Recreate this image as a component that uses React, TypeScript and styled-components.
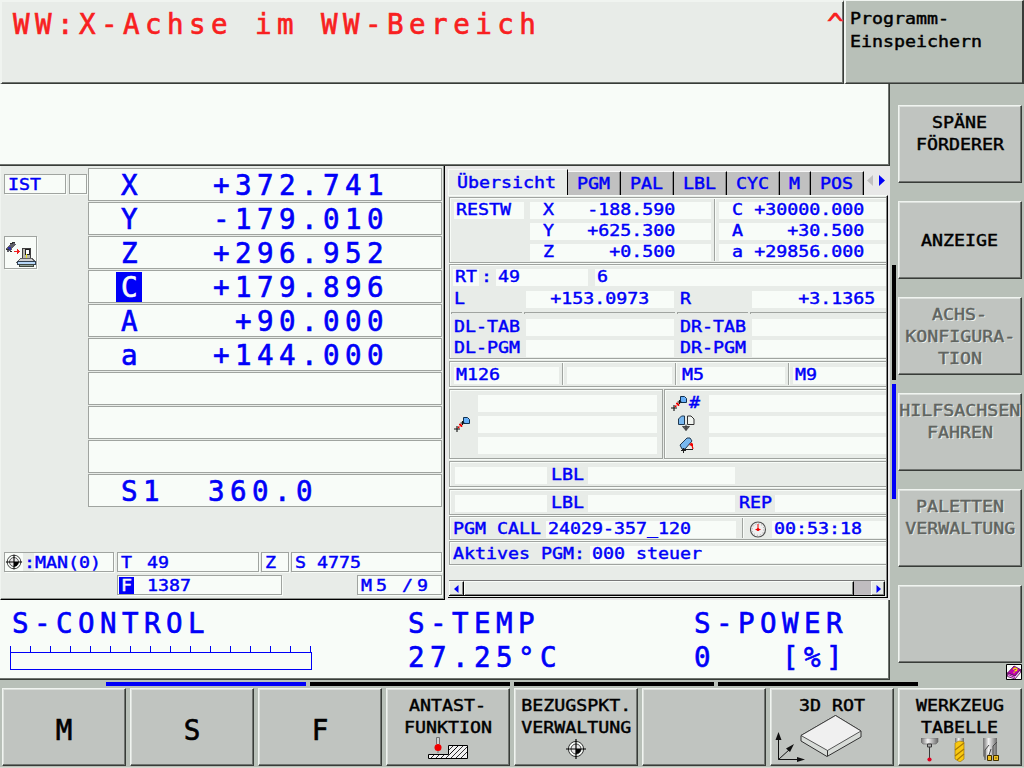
import React from 'react';
import styled, { createGlobalStyle, css } from 'styled-components';

const c = {
  frame: '#b8c0b8',
  panel: '#e8ece8',
  white: '#f8fcf8',
  button: '#c0c4c0',
  line: '#a0a4a0',
  mid: '#707470',
  dark: '#383c38',
  light: '#f0f4f0',
  blue: '#0000f8',
  red: '#f82020',
};

const Global = createGlobalStyle`
  * { box-sizing: border-box; }
  body { margin: 0; background: ${c.frame}; }
  svg { display: block; }
`;

type Align = 'left' | 'right' | 'center';

const Small = styled.span<{ $align?: Align; $color?: string; $shadow?: boolean; $pad?: number }>`
  display: block;
  flex: none;
  font: 15px/17px 'DejaVu Sans Mono', 'Liberation Mono', monospace;
  white-space: pre;
  color: ${p => p.$color ?? c.blue};
  text-align: ${p => p.$align ?? 'left'};
  margin-left: ${p => p.$pad ?? 0}px;
  transform: scaleX(1.218);
  transform-origin: ${p => p.$align ?? 'left'} center;
  -webkit-text-stroke: 0.42px currentColor;
  ${p => p.$shadow && css`text-shadow: 1px 1px 0 ${c.light};`}
`;

const Large = styled.span<{ $color?: string; $w?: number; $align?: Align }>`
  display: block;
  flex: none;
  width: ${p => (p.$w ? `${p.$w}px` : 'auto')};
  text-align: ${p => p.$align ?? 'left'};
  font: 27.5px/33px 'DejaVu Sans Mono', 'Liberation Mono', monospace;
  letter-spacing: 5.45px;
  white-space: pre;
  color: ${p => p.$color ?? c.blue};
  -webkit-text-stroke: 0.65px currentColor;
`;

const Screen = styled.div`
  width: 1024px;
  height: 768px;
  overflow: hidden;
  display: flex;
  flex-direction: column;
  background: ${c.frame};
`;

const Header = styled.header`
  display: flex;
  height: 84px;
`;

const Message = styled.div`
  display: flex;
  justify-content: space-between;
  width: 844px;
  padding: 6px 0 0 11px;
  background: ${c.panel};
  border-style: solid;
  border-width: 2px 1px 1px 2px;
  border-color: ${c.light} ${c.dark} ${c.dark} ${c.light};
  box-shadow: inset -1px -1px 0 ${c.mid};
`;

const Mode = styled.div`
  flex: 1;
  padding: 10px 0 0 4px;
  border-style: solid;
  border-width: 1px 2px 1px 2px;
  border-color: ${c.light} ${c.dark} ${c.dark} ${c.light};
  box-shadow: inset 0 -1px 0 ${c.mid};
  & > span + span { margin-top: 6px; }
`;

const Middle = styled.div`
  display: flex;
  height: 596px;
`;

const Main = styled.main`
  width: 890px;
  display: flex;
  flex-direction: column;
`;

const Prompt = styled.div`
  height: 82px;
  background: ${c.white};
  border-right: 1px solid ${c.dark};
  border-bottom: 1px solid ${c.dark};
  box-shadow: inset -1px -1px 0 ${c.mid};
`;

const Panels = styled.div`
  display: flex;
  height: 434px;
`;

const Position = styled.section`
  width: 445px;
  padding: 2px 0 0 3px;
  background: ${c.panel};
  border-style: solid;
  border-width: 0 1px 1px 1px;
  border-color: #000 #000 #000 ${c.light};
  box-shadow: inset -1px -1px 0 #909490;
`;

const Split = styled.div`
  display: flex;
`;

const Side = styled.div`
  width: 84px;
  padding-top: 6px;
`;

const Box = styled.div<{ $w: number; $h?: number; $ml?: number }>`
  display: flex;
  flex: none;
  align-items: flex-start;
  width: ${p => p.$w}px;
  height: ${p => p.$h ?? 20}px;
  margin-left: ${p => p.$ml ?? 0}px;
  background: ${c.white};
  border: 1px solid ${c.line};
  box-shadow: 1px 1px 0 ${c.white};
  & span { line-height: 20px; }
`;

const IconBox = styled(Box)`
  margin-top: 42px;
`;

const AxisList = styled.div`
  display: grid;
  gap: 1px;
  width: 354px;
`;

const AxisRow = styled.div`
  display: flex;
  align-items: flex-start;
  height: 33px;
  padding-left: 27px;
  background: ${c.white};
  border: 1px solid ${c.line};
`;

const AxisName = styled.div<{ $active?: boolean }>`
  width: ${p => (p.$active ? 26 : 81)}px;
  height: 30px;
  margin-top: 1px;
  margin-right: ${p => (p.$active ? 55 : 0)}px;
  padding-left: 5px;
  background: ${p => (p.$active ? c.blue : 'transparent')};
  & > span { line-height: 30px; }
`;

const AxisValue = styled.div`
  width: 192px;
  display: flex;
  justify-content: flex-end;
`;

const SpindleValue = styled.div`
  padding-left: 11px;
`;

const StatusLine = styled.div<{ $mt: number }>`
  display: flex;
  margin-top: ${p => p.$mt}px;
`;

const FTag = styled.div`
  width: 15px;
  height: 17px;
  margin: 1px 0 0 1px;
  padding-left: 2px;
  background: ${c.blue};
  & > span { line-height: 18px; }
`;

const Colon = styled.div`
  width: 11px;
  height: 18px;
  padding-left: 1px;
  background: ${c.panel};
`;

const Overview = styled.section`
  flex: 1;
  padding: 3px 2px 2px 3px;
  background: #e8e8e8;
`;

const Tabs = styled.div`
  display: flex;
  align-items: flex-end;
  height: 26px;
  padding-left: 1px;
`;

const Tab = styled.div<{ $w: number; $active?: boolean }>`
  flex: none;
  width: ${p => p.$w}px;
  height: ${p => (p.$active ? 26 : 24)}px;
  padding-top: ${p => (p.$active ? 5 : 4)}px;
  padding-right: ${p => (p.$active ? 0 : 1)}px;
  background: ${p => (p.$active ? c.panel : '#c0c0c0')};
  border-top: 1px solid #f8f8f8;
  border-right: 1px solid #000;
  box-shadow: ${p => (p.$active ? `-1px 0 0 ${c.white}` : 'inset -1px 0 0 #888')};
`;

const TabArrows = styled.div`
  padding: 0 0 8px 2px;
`;

const Content = styled.div`
  width: 440px;
  height: 403px;
  padding: 1px 0 0 1px;
  background: ${c.panel};
  border-right: 1px solid #000;
  border-bottom: 1px solid #000;
  border-top: 1px solid ${c.white};
  box-shadow: inset -1px 0 0 #888;
`;

const Group = styled.div<{ $h: number; $mb?: number; $pt?: number }>`
  width: 437px;
  height: ${p => p.$h}px;
  margin-bottom: ${p => p.$mb ?? 1}px;
  padding-top: ${p => p.$pt ?? 4}px;
  border: 1px solid ${c.line};
  border-right: 0;
  box-shadow: inset 1px 1px 0 ${c.white}, 0 1px 0 ${c.white};
`;

const Line = styled.div<{ $mt?: number }>`
  display: flex;
  height: 17px;
  margin-top: ${p => p.$mt ?? 0}px;
`;

const Label = styled.div<{ $w: number; $ml?: number }>`
  flex: none;
  width: ${p => p.$w}px;
  margin-left: ${p => p.$ml ?? 0}px;
`;

const Field = styled.div<{ $w?: number; $ml?: number; $end?: number }>`
  display: flex;
  flex: ${p => (p.$w ? 'none' : '1')};
  width: ${p => (p.$w ? `${p.$w}px` : 'auto')};
  height: 17px;
  margin-left: ${p => p.$ml ?? 0}px;
  padding-left: 2px;
  padding-right: ${p => p.$end ?? 0}px;
  justify-content: ${p => (p.$end ? 'flex-end' : 'flex-start')};
  background: ${c.white};
`;

const AxisField = styled(Field)`
  justify-content: space-between;
  padding-left: 13px;
`;

const Columns = styled.div`
  display: flex;
`;

const Stack = styled.div<{ $w?: number; $ml: number; $gap?: number }>`
  flex: ${p => (p.$w ? 'none' : '1')};
  width: ${p => (p.$w ? `${p.$w}px` : 'auto')};
  margin-left: ${p => p.$ml}px;
  display: grid;
  gap: ${p => p.$gap ?? 4}px;
  align-content: start;
`;

const VLine = styled.i<{ $h: number; $ml: number; $mt?: number }>`
  flex: none;
  width: 2px;
  height: ${p => p.$h}px;
  margin: ${p => p.$mt ?? -3}px 0 0 ${p => p.$ml}px;
  background: ${c.line};
  border-right: 1px solid ${c.white};
`;

const Rule = styled.div`
  display: flex;
  gap: 2px;
  margin: 4px 0 5px 1px;
  & > i {
    height: 2px;
    border-top: 1px solid ${c.line};
    border-left: 1px solid ${c.line};
  }
`;

const Seg = styled.i<{ $w: number }>`
  width: ${p => p.$w}px;
`;

const Pair = styled.div`
  display: flex;
  gap: 1px;
  margin-bottom: 2px;
`;

const Pane = styled.div<{ $w: number; $open?: boolean }>`
  display: flex;
  width: ${p => p.$w}px;
  height: 70px;
  padding-top: 5px;
  border: 1px solid ${c.line};
  border-right-width: ${p => (p.$open ? 0 : 1)}px;
  box-shadow: inset 1px 1px 0 ${c.white}, 0 1px 0 ${c.white};
`;

const IconColumn = styled.div<{ $w: number }>`
  flex: none;
  width: ${p => p.$w}px;
`;

const IconRow = styled.div<{ $ml: number; $mt: number }>`
  display: flex;
  height: 17px;
  margin-left: ${p => p.$ml}px;
  margin-top: ${p => p.$mt}px;
`;

const ScrollBar = styled.div`
  display: flex;
  width: 436px;
  height: 16px;
  margin-top: 15px;
  background: #c0bcc0;
  border-top: 1px solid #787878;
  border-bottom: 1px solid #000;
`;

const ScrollButton = styled.div<{ $w: number }>`
  width: ${p => p.$w}px;
  display: flex;
  align-items: center;
  justify-content: center;
  background: ${c.panel};
  border-left: 1px solid ${c.white};
  border-top: 1px solid ${c.white};
  border-right: 1px solid #000;
  box-shadow: inset -1px -1px 0 #888;
`;

const Thumb = styled(ScrollButton)`
  margin-right: 17px;
`;

const Monitor = styled.section`
  display: flex;
  height: 80px;
  padding: 6px 0 0 12px;
  background: ${c.white};
  border-right: 1px solid ${c.dark};
  border-bottom: 1px solid ${c.dark};
  box-shadow: inset -1px -1px 0 ${c.mid};
`;

const Reading = styled.div<{ $w: number }>`
  width: ${p => p.$w}px;
  & > span { line-height: 34px; }
`;

const Gauge = styled.div`
  width: 302px;
  margin: 6px 0 0 -2px;
`;

const Ticks = styled.div`
  display: flex;
  height: 6px;
  gap: 19px;
  & > i { width: 1px; background: ${c.blue}; }
`;

const Bar = styled.div`
  height: 18px;
  border: 1px solid ${c.blue};
`;

const SideKeys = styled.aside`
  display: flex;
  width: 134px;
  padding-left: 2px;
`;

const VBars = styled.div`
  display: grid;
  align-content: start;
  gap: 4px;
  width: 4px;
  margin: 181px 2px 0 0;
`;

const VBar = styled.i<{ $color: string }>`
  height: 115px;
  background: ${p => p.$color};
`;

const SideColumn = styled.div`
  padding-top: 21px;
  width: 124px;
`;

const KeyList = styled.div`
  display: grid;
  gap: 18px;
`;

const Key = styled.button`
  display: flex;
  flex-direction: column;
  align-items: center;
  width: 124px;
  height: 78px;
  margin: 0;
  padding: 9px 0 0;
  background: ${c.button};
  border-style: solid;
  border-width: 1px;
  border-color: ${c.light} ${c.dark} ${c.dark} ${c.light};
  box-shadow: inset -1px -1px 0 ${c.mid}, inset 1px 1px 0 #dce0dc;
  border-radius: 0;
  & > span + span { margin-top: 5px; }
`;

const KeyLarge = styled(Key)`
  padding-top: 25px;
  & > span { letter-spacing: 0; }
`;

const Help = styled.div`
  margin: 1px 0 0 108px;
`;

const Footer = styled.footer`
  height: 88px;
  border-bottom: 1px solid #d8d8d0;
`;

const HBars = styled.div`
  display: flex;
  gap: 4px;
  padding: 2px 0 0 106px;
`;

const HBar = styled.i<{ $color: string }>`
  width: 200px;
  height: 4px;
  background: ${p => p.$color};
`;

const KeyRow = styled.div`
  display: flex;
  gap: 4px;
  margin: 2px 0 0 2px;
`;

const KeyIcon = styled.div<{ $mt: number; $ml?: number }>`
  margin-top: ${p => p.$mt}px;
  margin-left: ${p => p.$ml ?? 0}px;
`;

const Target = ({ size, cross }: { size: number; cross?: boolean }) => (
  <svg width={size} height={size} viewBox="0 0 20 20">
    <circle cx="10" cy="10" r="7.6" fill={c.white} stroke="#303030" />
    <circle cx="10" cy="10" r="5" fill="#e8e8e8" stroke="#484848" />
    <path d="M10 10H15A5 5 0 0 1 10 15Z" fill="#000" />
    <path d={cross ? 'M0 10H20M10 0V20' : 'M1 10H19M10 2V18'} stroke="#000" strokeWidth="1.2" />
  </svg>
);

const HandwheelIcon = () => (
  <svg width="31" height="31" viewBox="5 237 31 31" shapeRendering="crispEdges">
    <path d="M6 248l4-4 4-1 2 1-3 3-2 4-4 1z" fill="#606068" />
    <path d="M8 247h3v3h-3z" fill="#3030a0" />
    <path d="M10 244l5-2M6 249h3M10 251h2" stroke="#303030" />
    <path d="M14 251h6M17 249v5M18 250v3" stroke="#f02020" />
    <path d="M22.500 258V248.500H30.500V258" fill="#b8b8b0" stroke="#404040" />
    <path d="M25 249h4v5h-4z" fill="#fff" stroke="#202020" />
    <path d="M26 254h1v4h-1z" fill="#e8e020" />
    <path d="M21 258h11l3 4H17z" fill="#d0d0d0" stroke="#606060" />
    <path d="M17.500 261.500h18v3h-18z" fill="#b8d8f8" stroke="#304050" />
    <path d="M19.500 264.500h14v2h-14z" fill="#90a098" stroke="#404840" />
  </svg>
);

const ShiftIcon = () => (
  <svg width="16" height="16" viewBox="0 0 16 16">
    <path d="M9.500 1.500h4l2 2v4h-6z" fill="#68b0f8" stroke="#103050" />
    <path d="M0 13h6M3 10v6M6.500 7h4M8.500 5v4" stroke="#101010" strokeWidth="1.1" />
    <path d="M4 12l4-4M5 8.500h2.500v3" stroke="#f00000" strokeWidth="1.500" strokeDasharray="2 1" fill="none" />
  </svg>
);

const MirrorIcon = () => (
  <svg width="17" height="16" viewBox="0 0 17 16">
    <path d="M.5 9.500V4l3-3h3v8.500z" fill="#78b8f0" stroke="#203850" />
    <path d="M9.500 9.500V1h3.500l3 3v5.500z" fill="#f0f4f0" stroke="#303030" />
    <path d="M4.500 11.500h7l-3.500 4z" fill="#606060" stroke="#383838" strokeWidth=".8" />
    <path d="M8 9.500v6" stroke="#383838" />
  </svg>
);

const RotateIcon = () => (
  <svg width="16" height="17" viewBox="0 0 16 17">
    <path d="M1 8L8 1h3l2 3-7 8H3z" fill="#78b8f0" stroke="#203850" />
    <path d="M3 12.500H14M4.500 11v5M2 13.500h5" stroke="#202020" />
    <path d="M10.500 8l2-1.500L14 12" stroke="#f00000" fill="none" strokeWidth="1.200" />
    <path d="M11.500 6.500h2.500v2.500h-2.500z" fill="#f00000" />
  </svg>
);

const ClockIcon = () => (
  <svg width="17" height="17" viewBox="0 0 17 17">
    <circle cx="8" cy="8.500" r="7.500" fill="#f0f0f0" stroke="#505050" strokeWidth="1.100" />
    <circle cx="8" cy="8.500" r="5.800" fill="none" stroke="#a0a0a0" strokeDasharray="1 2" />
    <path d="M8 3V9M5.500 8.500h5" stroke="#f00000" />
    <circle cx="8" cy="8.500" r="1.600" fill="#f00000" />
  </svg>
);

const ProbeIcon = () => (
  <svg width="40" height="22" viewBox="0 0 40 22">
    <path d="M8.500 7V.5h3V7M10 12v4" fill="#d0d0d0" stroke="#707070" />
    <circle cx="10" cy="10.500" r="3.500" fill="#f00000" />
    <path d="M.5 21.500V17.500H20.500V8.500H39.500V21.500Z" fill="#f0f0f0" stroke="#000" />
    <path d="M3 21l3-3M8 21l3-3M13 21l3-3M18 21L30 9M22 17l8-8M21 13l4-4M23 21L35 9M28 21L39 10M33 21l6-6" stroke="#000" strokeWidth=".8" />
  </svg>
);

const PlaneIcon = () => (
  <svg width="88" height="50" viewBox="0 0 88 50">
    <path d="M26 20.500L60.500.5 86 16v6L52 41.500 26 26z" fill="#d8dcd8" stroke="#303030" />
    <path d="M26 20.500L60.500.5 86 16 52.500 35.500z" fill="#f0f0f0" stroke="#303030" strokeWidth=".8" />
    <path d="M52.500 35.500V41" stroke="#303030" />
    <path d="M3.500 20V44.500H24M3.500 44.500L15 34" fill="none" stroke="#101010" />
    <path d="M.5 25L3.500 17l3 8zM22 42l8 2.500-8 2.500zM11 33.500L19 29l-4 8z" fill="#101010" />
  </svg>
);

const ToolsIcon = () => (
  <svg width="78" height="24" viewBox="0 0 78 24">
    <defs>
      <linearGradient id="steel" x2="1">
        <stop offset="0" stopColor="#707070" />
        <stop offset=".4" stopColor="#f4f4f4" />
        <stop offset="1" stopColor="#686868" />
      </linearGradient>
    </defs>
    <path d="M0 0H17V4l-2 2H2L0 4z" fill="url(#steel)" stroke="#686868" strokeWidth=".6" />
    <path d="M6.500 6h4v3h-4zM8.500 9v12" fill="#b0b0b0" stroke="#383838" />
    <circle cx="8.500" cy="21.500" r="2.100" fill="#e00020" />
    <path d="M34 0h9v4h-9z" fill="url(#steel)" />
    <path d="M34 5l4-2 5 1v17l-4 3-5-3z" fill="#f8c810" stroke="#987000" strokeWidth=".6" />
    <path d="M34 12l9-7M34 18l9-7M36 22l7-6" stroke="#a87800" strokeWidth="1.100" />
    <path d="M62 0H76V19l-4 4H66l-4-5z" fill="url(#steel)" />
    <path d="M64 22V12l4-5M72 17V8l4-4M68 17l2-6" fill="none" stroke="#484848" />
    <path d="M66.500 17.500h4v5h-4zM72.500 17.500h5v5h-5z" fill="#f0c020" stroke="#403000" />
    <path d="M74.500 19.500h1v1h-1z" fill="#000" />
  </svg>
);

const HelpIcon = () => (
  <svg width="16" height="16" viewBox="0 0 16 16">
    <path d="M.5.5h15v15H.5z" fill="#f8fcf8" stroke="#000" />
    <path d="M1.500 9L8 2l6.500 3.500L9 12z" fill="#c000b0" stroke="#400040" strokeWidth=".7" />
    <path d="M1.500 9v3.500L9 15l5.500-6.500v-3L9 12z" fill="#f0c8f0" stroke="#500050" strokeWidth=".8" />
    <path d="M2 10.500L9 13.500" stroke="#a000a0" />
    <path d="M7 5.500l2-1.500 2 1-.5 1.500-2 .5M7.500 8.500h1" fill="none" stroke="#f8e800" strokeWidth="1.300" />
  </svg>
);

const axes = [
  { name: 'X', value: '+372.741' },
  { name: 'Y', value: '-179.010' },
  { name: 'Z', value: '+296.952' },
  { name: 'C', value: '+179.896', active: true },
  { name: 'A', value: '+90.000' },
  { name: 'a', value: '+144.000' },
  {},
  {},
  {},
] as { name?: string; value?: string; active?: boolean }[];

const tabs: [string, number][] = [['PGM', 53], ['PAL', 53], ['LBL', 53], ['CYC', 53], ['M', 31], ['POS', 53]];
const rest = [['X', '-188.590'], ['Y', '+625.300'], ['Z', '+0.500']];
const restRotary = [['C', '+30000.000'], ['A', '+30.500'], ['a', '+29856.000']];

const sideKeys: { lines: string[]; off?: boolean }[] = [
  { lines: ['SPÄNE', 'FÖRDERER'] },
  { lines: [' ', 'ANZEIGE'] },
  { lines: ['ACHS-', 'KONFIGURA-', 'TION'], off: true },
  { lines: ['HILFSACHSEN', 'FAHREN'], off: true },
  { lines: ['PALETTEN', 'VERWALTUNG'], off: true },
  { lines: [] },
];

const KeyText = ({ lines, off }: { lines: string[]; off?: boolean }) => (
  <>
    {lines.map(line => (
      <Small key={line} $align="center" $color={off ? '#606460' : '#000'} $shadow={off}>{line}</Small>
    ))}
  </>
);

export default function App() {
  return (
    <Screen>
      <Global />
      <Header>
        <Message>
          <Large $color={c.red}>WW:X-Achse im WW-Bereich</Large>
          <Large $color={c.red} $w={16}>^</Large>
        </Message>
        <Mode>
          <Small $color="#000">Programm-</Small>
          <Small $color="#000">Einspeichern</Small>
        </Mode>
      </Header>
      <Middle>
        <Main>
          <Prompt />
          <Panels>
            <Position>
              <Split>
                <Side>
                  <Split>
                    <Box $w={62}><Small $pad={3}>IST</Small></Box>
                    <Box $w={18} $ml={3} />
                  </Split>
                  <IconBox $w={33} $h={33}><HandwheelIcon /></IconBox>
                </Side>
                <AxisList>
                  {axes.map((axis, i) => (
                    <AxisRow key={i}>
                      {axis.name && (
                        <>
                          <AxisName $active={axis.active}>
                            <Large $color={axis.active ? c.white : c.blue}>{axis.name}</Large>
                          </AxisName>
                          <AxisValue><Large>{axis.value}</Large></AxisValue>
                        </>
                      )}
                    </AxisRow>
                  ))}
                  <AxisRow>
                    <AxisName><Large>S1</Large></AxisName>
                    <SpindleValue><Large>360.0</Large></SpindleValue>
                  </AxisRow>
                </AxisList>
              </Split>
              <StatusLine $mt={45}>
                <Box $w={110}>
                  <Target size={18} />
                  <Colon><Small>:</Small></Colon>
                  <Small $pad={1}>MAN(0)</Small>
                </Box>
                <Box $w={142} $ml={3}>
                  <Label $w={26} $ml={3}><Small>T</Small></Label>
                  <Small>49</Small>
                </Box>
                <Box $w={28} $ml={2}><Small $pad={3}>Z</Small></Box>
                <Box $w={151} $ml={2}><Small $pad={3}>S 4775</Small></Box>
              </StatusLine>
              <StatusLine $mt={3}>
                <Box $w={165} $ml={113}>
                  <FTag><Small $color={c.white}>F</Small></FTag>
                  <Small $pad={13}>1387</Small>
                </Box>
                <Box $w={85} $ml={75}>
                  <Label $w={15} $ml={3}><Small>M</Small></Label>
                  <Label $w={26}><Small>5</Small></Label>
                  <Label $w={15}><Small>/</Small></Label>
                  <Small>9</Small>
                </Box>
              </StatusLine>
            </Position>
            <Overview>
              <Tabs>
                <Tab $w={119} $active><Small $pad={8}>Übersicht</Small></Tab>
                {tabs.map(([name, w]) => (
                  <Tab key={name} $w={w}><Small $align="center">{name}</Small></Tab>
                ))}
                <TabArrows>
                  <svg width="20" height="12" viewBox="0 0 20 12">
                    <path d="M7 0v11L1 5.500z" fill="#c0c0c0" />
                    <path d="M13 0v11L19 5.500z" fill={c.blue} />
                  </svg>
                </TabArrows>
              </Tabs>
              <Content>
                <Group $h={66}>
                  <Columns>
                    <Field $w={70} $ml={4}><Small>RESTW</Small></Field>
                    <Stack $w={181} $ml={6}>
                      {rest.map(([n, v]) => (
                        <AxisField key={n} $w={181} $end={36}><Small>{n}</Small><Small $align="right">{v}</Small></AxisField>
                      ))}
                    </Stack>
                    <VLine $h={62} $ml={3} />
                    <Stack $ml={3}>
                      {restRotary.map(([n, v]) => (
                        <AxisField key={n} $end={22}><Small>{n}</Small><Small $align="right">{v}</Small></AxisField>
                      ))}
                    </Stack>
                  </Columns>
                </Group>
                <Group $h={95} $mb={2}>
                  <Line>
                    <Field $w={26} $ml={3}><Small>RT</Small></Field>
                    <Label $w={15} $ml={2}><Small>:</Small></Label>
                    <Field $w={92}><Small>49</Small></Field>
                    <Field $ml={7}><Small>6</Small></Field>
                  </Line>
                  <Line $mt={5}>
                    <Label $w={72} $ml={4}><Small>L</Small></Label>
                    <Field $w={148} $end={25}><Small $align="right">+153.0973</Small></Field>
                    <Label $w={72} $ml={6}><Small>R</Small></Label>
                    <Field $end={11}><Small $align="right">+3.1365</Small></Field>
                  </Line>
                  <Rule><Seg $w={71} /><Seg $w={151} /><Seg $w={71} /><Seg $w={136} /></Rule>
                  {['TAB', 'PGM'].map((kind, i) => (
                    <Line key={kind} $mt={i * 4}>
                      <Label $w={72} $ml={4}><Small>DL-{kind}</Small></Label>
                      <Field $w={148} />
                      <Label $w={72} $ml={6}><Small>DR-{kind}</Small></Label>
                      <Field />
                    </Line>
                  ))}
                </Group>
                <Group $h={26} $mb={2} $pt={5}>
                  <Line>
                    <Field $w={105} $ml={4}><Small>M126</Small></Field>
                    <VLine $h={22} $ml={3} $mt={-4} />
                    <Field $w={105} $ml={3} />
                    <VLine $h={22} $ml={3} $mt={-4} />
                    <Field $w={105} $ml={3}><Small>M5</Small></Field>
                    <VLine $h={22} $ml={3} $mt={-4} />
                    <Field $ml={3}><Small>M9</Small></Field>
                  </Line>
                </Group>
                <Pair>
                  <Pane $w={214}>
                    <IconColumn $w={28}><IconRow $ml={4} $mt={21}><ShiftIcon /></IconRow></IconColumn>
                    <Stack $w={179} $ml={0}><Field /><Field /><Field /></Stack>
                  </Pane>
                  <Pane $w={222} $open>
                    <IconColumn $w={44}>
                      <IconRow $ml={6} $mt={0}><ShiftIcon /><Small $pad={2}>#</Small></IconRow>
                      <IconRow $ml={13} $mt={3}><MirrorIcon /></IconRow>
                      <IconRow $ml={14} $mt={5}><RotateIcon /></IconRow>
                    </IconColumn>
                    <Stack $ml={0}><Field /><Field /><Field /></Stack>
                  </Pane>
                </Pair>
                <Group $h={26} $mb={2} $pt={5}>
                  <Line>
                    <Field $w={92} $ml={5} />
                    <Label $w={37} $ml={4}><Small>LBL</Small></Label>
                    <Field $w={147} />
                  </Line>
                </Group>
                <Group $h={26} $pt={5}>
                  <Line>
                    <Field $w={92} $ml={5} />
                    <Label $w={37} $ml={4}><Small>LBL</Small></Label>
                    <Field $w={147} />
                    <Label $w={36} $ml={4}><Small>REP</Small></Label>
                    <Field />
                  </Line>
                </Group>
                <Group $h={24}>
                  <Line>
                    <Label $w={93} $ml={3}><Small>PGM CALL</Small></Label>
                    <Field $w={190}><Small>24029-357_120</Small></Field>
                    <VLine $h={20} $ml={6} />
                    <Label $w={22} $ml={6}><ClockIcon /></Label>
                    <Field><Small>00:53:18</Small></Field>
                  </Line>
                </Group>
                <Group $h={24}>
                  <Line>
                    <Label $w={137} $ml={3}><Small>Aktives PGM:</Small></Label>
                    <Field><Small>000 steuer</Small></Field>
                  </Line>
                </Group>
                <ScrollBar>
                  <ScrollButton $w={15}><svg width="5" height="8"><path d="M4.500 0v8L0 4z" fill={c.blue} /></svg></ScrollButton>
                  <Thumb $w={390} />
                  <ScrollButton $w={14}><svg width="5" height="8"><path d="M.5 0v8L5 4z" fill={c.blue} /></svg></ScrollButton>
                </ScrollBar>
              </Content>
            </Overview>
          </Panels>
          <Monitor>
            <Reading $w={396}>
              <Large>S-CONTROL</Large>
              <Gauge>
                <Ticks>{Array.from({ length: 16 }, (_, i) => <i key={i} />)}</Ticks>
                <Bar />
              </Gauge>
            </Reading>
            <Reading $w={286}><Large>S-TEMP</Large><Large>27.25°C</Large></Reading>
            <Reading $w={190}><Large>S-POWER</Large><Large>0   [%]</Large></Reading>
          </Monitor>
        </Main>
        <SideKeys>
          <VBars><VBar $color="#000" /><VBar $color={c.blue} /></VBars>
          <SideColumn>
            <KeyList>
              {sideKeys.map((key, i) => <Key key={i}><KeyText {...key} /></Key>)}
            </KeyList>
            <Help><HelpIcon /></Help>
          </SideColumn>
        </SideKeys>
      </Middle>
      <Footer>
        <HBars>
          <HBar $color={c.blue} /><HBar $color="#000" /><HBar $color="#000" /><HBar $color="#000" />
        </HBars>
        <KeyRow>
          {['M', 'S', 'F'].map(k => <KeyLarge key={k}><Large $color="#000">{k}</Large></KeyLarge>)}
          <Key><KeyText lines={['ANTAST-', 'FUNKTION']} /><KeyIcon $mt={0}><ProbeIcon /></KeyIcon></Key>
          <Key><KeyText lines={['BEZUGSPKT.', 'VERWALTUNG']} /><KeyIcon $mt={2}><Target size={20} cross /></KeyIcon></Key>
          <Key />
          <Key><KeyText lines={['3D ROT']} /><KeyIcon $mt={0} $ml={-26}><PlaneIcon /></KeyIcon></Key>
          <Key><KeyText lines={['WERKZEUG', 'TABELLE']} /><KeyIcon $mt={1}><ToolsIcon /></KeyIcon></Key>
        </KeyRow>
      </Footer>
    </Screen>
  );
}
